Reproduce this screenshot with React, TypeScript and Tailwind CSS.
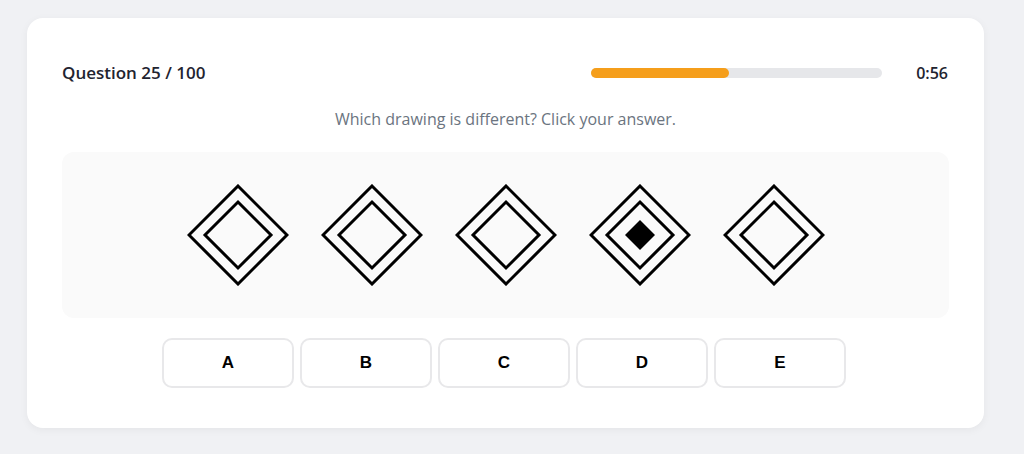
const OPTIONS = ["A", "B", "C", "D", "E"];

function Diamond({ filled }: { filled?: boolean }) {
  return (
    <svg width="102" height="102" viewBox="0 0 102 102" fill="none">
      <polygon points="51,2 100,51 51,100 2,51" stroke="#000" strokeWidth="3" />
      <polygon points="51,18 84,51 51,84 18,51" stroke="#000" strokeWidth="3" />
      {filled && <polygon points="51,36 66,51 51,66 36,51" fill="#000" />}
    </svg>
  );
}

export default function App() {
  const progress = 47.5;

  return (
    <div
      className="min-h-[454px] bg-[#f0f1f4] pt-[18px] pl-[27px] pr-[40px]"
      style={{ fontFamily: '"Open Sans", "Noto Sans", sans-serif' }}
    >
      <div className="w-[957px] rounded-2xl bg-white px-[35px] pt-[35px] pb-[40px] shadow-[0_2px_8px_rgba(0,0,0,0.05)]">
        <div className="flex h-10 items-center">
          <span className="text-[17px] font-semibold text-[#1f2430]">Question 25 / 100</span>
          <div className="ml-auto mr-[34px] h-[10px] w-[291px] rounded-full bg-[#e6e7ea]">
            <div className="h-full rounded-full bg-[#f59e1b]" style={{ width: `${progress}%` }} />
          </div>
          <span className="mr-px text-[16px] font-semibold text-[#1f2430]">0:56</span>
        </div>

        <p className="mt-[15px] text-center text-[16px] leading-[22px] text-[#6b7480]">
          Which drawing is different? Click your answer.
        </p>

        <div className="mt-[22px] flex h-[166px] items-center justify-center gap-[32px] rounded-xl bg-[#fafafa]">
          {OPTIONS.map((o) => (
            <Diamond key={o} filled={o === "D"} />
          ))}
        </div>

        <div className="mt-[20px] flex justify-center gap-[6px] pr-[3px]">
          {OPTIONS.map((o) => (
            <button
              key={o}
              className="h-[50px] w-[132px] rounded-[10px] border-2 border-[#e8e8ea] bg-white text-[17px] font-bold text-black"
              style={{ fontFamily: '"Liberation Sans", Arial, sans-serif' }}
            >
              {o}
            </button>
          ))}
        </div>
      </div>
    </div>
  );
}
